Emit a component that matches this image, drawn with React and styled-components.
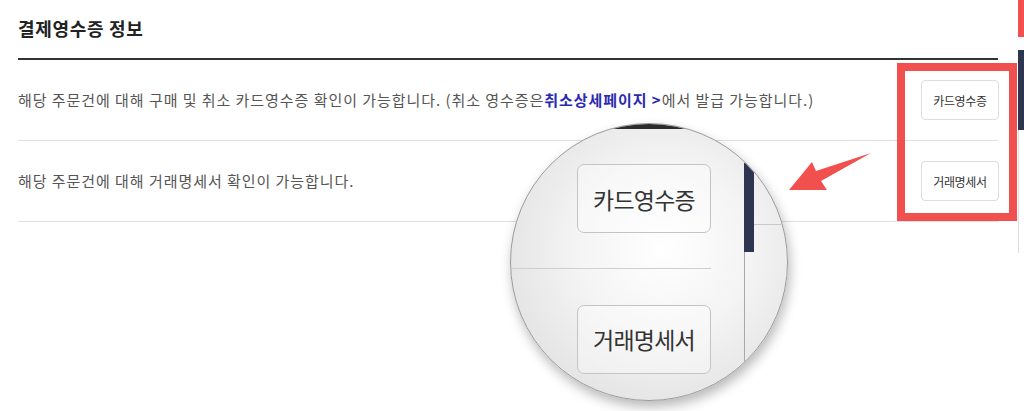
import React from "react";
import styled, { createGlobalStyle } from "styled-components";

const GlobalStyle = createGlobalStyle`
    html, body {
        margin: 0;
        padding: 0;
        background: #fff;
    }
    body {
        font-family: "Noto Sans CJK KR", "Noto Sans", sans-serif;
        color: #555;
    }
`

const rows = [
    { id: "card", label: "카드영수증", link: true },
    { id: "bill", label: "거래명세서", link: false },
];

function App() {
    return (
        <>
            <GlobalStyle />
            <Page>
                <Main>
                    <Title>결제영수증 정보</Title>
                    {rows.map(row => (
                        <Row key={row.id}>
                            {row.link ? (
                                <Desc>
                                    해당 주문건에 대해 구매 및 취소 카드영수증 확인이 가능합니다. (취소 영수증은
                                    <DetailLink href="#">취소상세페이지 &gt;</DetailLink>
                                    에서 발급 가능합니다.)
                                </Desc>
                            ) : (
                                <Desc>해당 주문건에 대해 거래명세서 확인이 가능합니다.</Desc>
                            )}
                            <SmallButton type="button">{row.label}</SmallButton>
                        </Row>
                    ))}
                </Main>
                <SideStrip>
                    <SideBlock $color="#f24f4f" $height={37} />
                    <SideBlock $color="#fff" $height={13} />
                    <SideBlock $color="#2e3550" $height={80} />
                    <SideRule />
                </SideStrip>

                {/* annotation overlays */}
                <Highlight />
                <Arrow width="92" height="50" viewBox="0 0 92 50">
                    <polygon points="4,42 27,14 31,23 86,5 36,33 42,42" fill="#f24f4f" />
                </Arrow>
                <Lens>
                    <LensTopBand />
                    <LensBody>
                        <LensLeft>
                            <LensRow $border>
                                <BigButton>카드영수증</BigButton>
                            </LensRow>
                            <LensRow>
                                <BigButton>거래명세서</BigButton>
                            </LensRow>
                        </LensLeft>
                        <LensRight>
                            <LensNavy />
                            <LensRule />
                        </LensRight>
                    </LensBody>
                </Lens>
            </Page>
        </>
    );
}

export default App;

const Page = styled.div`
    position: relative;
    display: flex;
    width: 1024px;
    height: 411px;
    overflow: hidden;
`
const Main = styled.div`
    flex: 1;
    padding: 0 20px 0 18px;
`
const Title = styled.h2`
    margin: 0;
    padding-top: 17px;
    height: 60px;
    box-sizing: border-box;
    border-bottom: 2px solid #333;
    font-size: 18px;
    line-height: 22px;
    font-weight: 700;
    letter-spacing: 0.7px;
    color: #222;
`
const Row = styled.div`
    display: flex;
    align-items: center;
    justify-content: space-between;
    height: 81px;
    box-sizing: border-box;
    border-bottom: 1px solid #e0e0e0;
`
const Desc = styled.p`
    margin: 0;
    font-size: 15px;
    line-height: 22px;
    letter-spacing: 0.95px;
    color: #555;
`
const DetailLink = styled.a`
    color: #2a2ab0;
    font-weight: 700;
    text-decoration: none;
`
const SmallButton = styled.button`
    width: 78px;
    height: 40px;
    margin-right: -1px;
    background: #fff;
    border: 1px solid #dcdcdc;
    border-radius: 4px;
    font-family: "Noto Sans CJK KR", sans-serif;
    font-size: 12px;
    color: #333;
    letter-spacing: -0.3px;
    padding: 0;
`
const SideStrip = styled.div`
    width: 6px;
    display: flex;
    flex-direction: column;
`
const SideBlock = styled.div`
    height: ${p => p.$height}px;
    background: ${p => p.$color};
`
const SideRule = styled.div`
    height: 123px;
    border-left: 1px solid #ddd;
`
const Highlight = styled.div`
    position: absolute;
    left: 897px;
    top: 63px;
    width: 120px;
    height: 158px;
    box-sizing: border-box;
    border: 8px solid #f24f4f;
`
const Arrow = styled.svg`
    position: absolute;
    left: 785px;
    top: 148px;
`
const Lens = styled.div`
    position: absolute;
    left: 510px;
    top: 123px;
    width: 278px;
    height: 278px;
    box-sizing: border-box;
    border-radius: 50%;
    overflow: hidden;
    border: 1px solid #9a9a9a;
    background: radial-gradient(circle at 55% 45%, #ffffff 0%, #f4f4f4 40%, #e2e2e2 80%, #d0d0d0 100%);
    box-shadow: 2px 6px 12px rgba(0, 0, 0, 0.28);
`
const LensTopBand = styled.div`
    height: 5px;
    background: #2b2b2b;
`
const LensBody = styled.div`
    display: flex;
    gap: 33px;
    height: 100%;
`
const LensLeft = styled.div`
    width: 200px;
    display: flex;
    flex-direction: column;
`
const LensRow = styled.div`
    height: 140px;
    flex-shrink: 0;
    display: flex;
    align-items: center;
    justify-content: flex-end;
    box-sizing: border-box;
    border-bottom: ${p => (p.$border ? "1px solid #cfcfcf" : "none")};
`
const BigButton = styled.div`
    width: 134px;
    height: 69px;
    box-sizing: border-box;
    display: flex;
    align-items: center;
    justify-content: center;
    border: 1px solid #c4c4c4;
    border-radius: 7px;
    background: rgba(255, 255, 255, 0.35);
    font-size: 23px;
    color: #333;
    letter-spacing: -0.8px;
`
const LensRight = styled.div`
    flex: 1;
    display: flex;
    align-items: flex-start;
    border-left: 1px solid #a8a8a8;
`
const LensNavy = styled.div`
    width: 10px;
    height: 89px;
    margin: 34px 0 0 -1px;
    background: #2e3550;
`
const LensRule = styled.div`
    flex: 1;
    height: 95px;
    border-bottom: 1px solid #c8c8c8;
`
